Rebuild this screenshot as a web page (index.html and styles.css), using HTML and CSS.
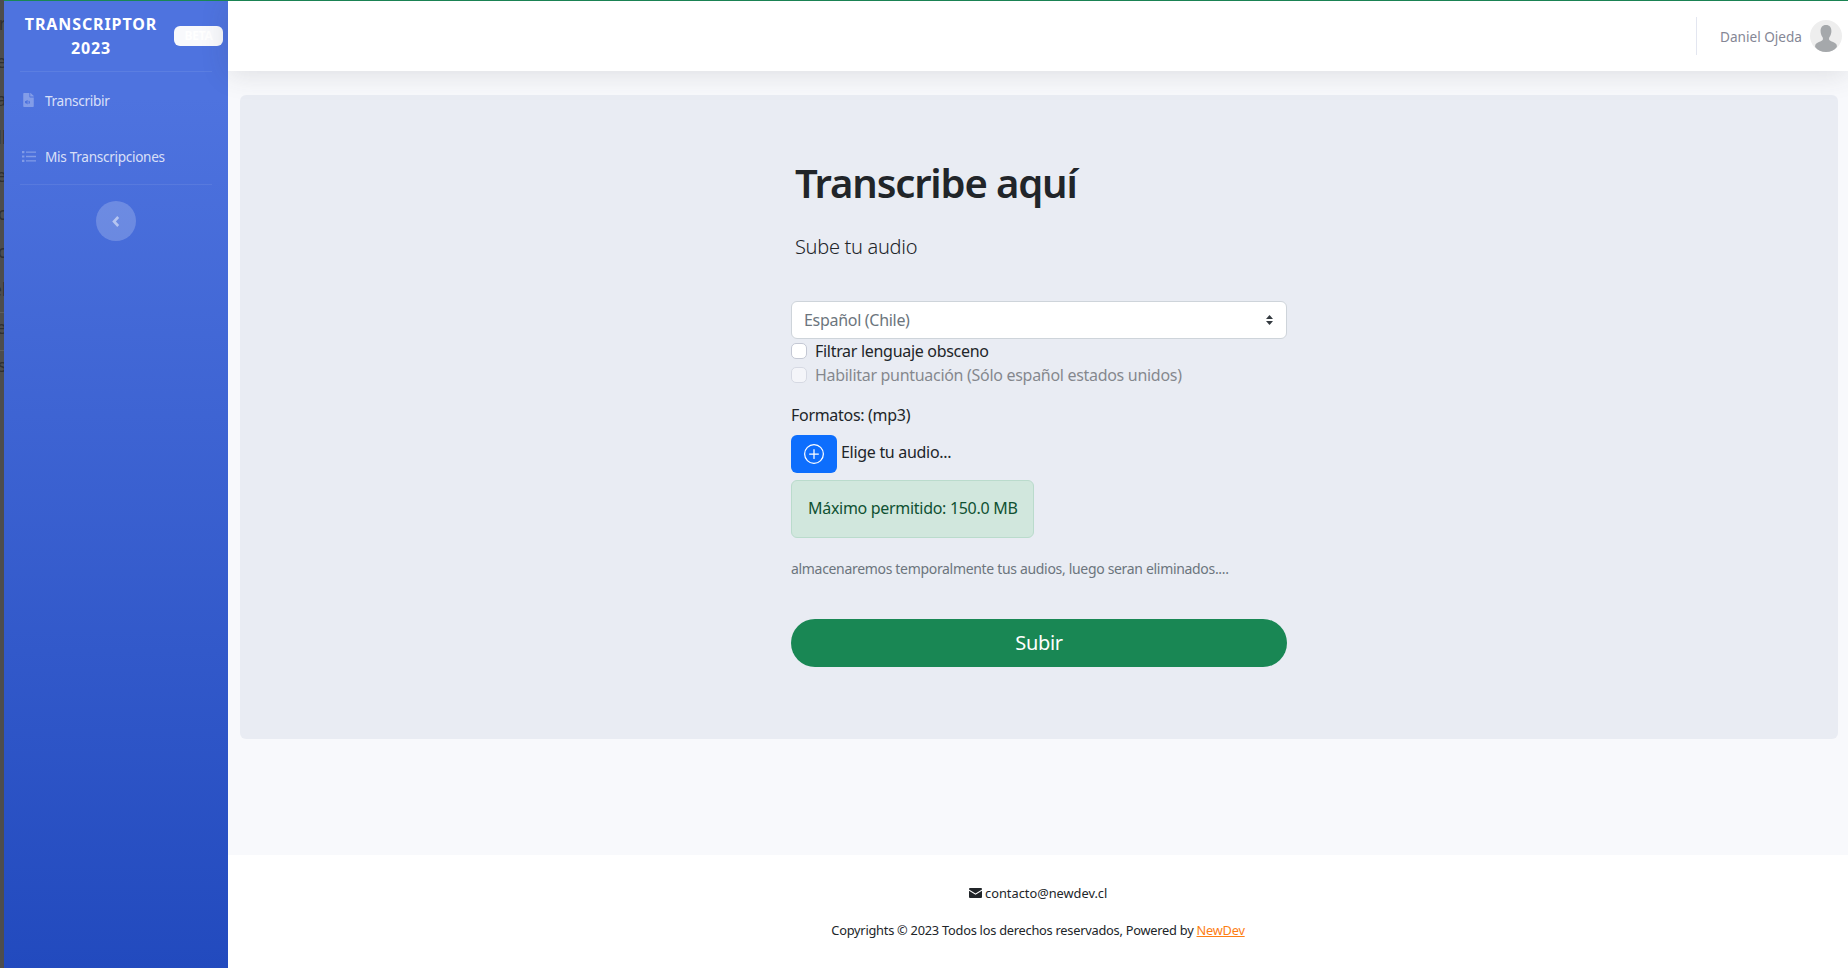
FILE: index.html
```html
<!DOCTYPE html>
<html>

<head>
    <meta charset="utf-8">
    <title>Transcriptor 2023</title>
    <link rel="stylesheet" href="styles.css">
</head>

<body>
    <div class="backdrop">
        <span>r</span>
        <span>e</span>
        <span>a</span>
        <span>ll</span>
        <span>e</span>
        <span>c</span>
        <span>c</span>
        <span>el</span>
        <span class="rule"></span>
        <span>e</span>
        <span class="rule"></span>
        <span>s</span>
    </div>

    <div id="wrapper">
        <aside class="sidebar">
            <div class="brand">
                <div class="brand-text">Transcriptor 2023</div>
                <span class="badge">BETA</span>
            </div>
            <hr class="sidebar-divider">
            <a class="nav-link" href="#">
                <svg class="nav-icon" width="11" height="14" viewBox="0 0 384 512"><path d="M224 136V0H24C10.700 0 0 10.700 0 24v464c0 13.300 10.700 24 24 24h336c13.300 0 24-10.700 24-24V160H248c-13.200 0-24-10.800-24-24zm-64 268c0 10.700-12.900 16-20.500 8.500L104 376H76c-6.600 0-12-5.400-12-12v-56c0-6.600 5.400-12 12-12h28l35.500-36.500c7.600-7.600 20.500-2.200 20.500 8.500v136zm33.200-47.600c9.100-9.300 9.100-24.100 0-33.400-22.100-22.800 12.200-56.200 34.400-33.500 27.200 27.900 27.200 72.400 0 100.400-21.800 22.300-56.900-10.400-34.400-33.500zM384 121.900v6.100H256V0h6.100c6.400 0 12.500 2.500 17 7l97.900 98c4.500 4.500 7 10.600 7 16.900z"/></svg>
                <span class="nav-text">Transcribir</span>
            </a>
            <a class="nav-link" href="#">
                <svg class="nav-icon list" width="14" height="11" viewBox="0 0 14 11"><path d="M0 0h2.400v2.200H0zM0 4.400h2.400v2.200H0zM0 8.800h2.400V11H0zM4 .4h10v1.400H4zM4 4.800h10v1.400H4zM4 9.200h10v1.400H4z"/></svg>
                <span class="nav-text">Mis Transcripciones</span>
            </a>
            <hr class="sidebar-divider last">
            <button class="sidebar-toggle" type="button">
                <svg width="8" height="11" viewBox="0 0 8 11"><path d="M6.200 1 2 5.500l4.200 4.500" fill="none" stroke="currentColor" stroke-width="2.600"/></svg>
            </button>
        </aside>

        <div class="page">
            <header class="topbar">
                <div class="topbar-divider"></div>
                <span class="user-name">Daniel Ojeda</span>
                <svg class="avatar" width="32" height="32" viewBox="0 0 32 32">
                    <circle cx="16" cy="16" r="16" fill="#eeeeee"/>
                    <path fill="#a5a8ab" d="M16 5c-3.700 0-5.600 2.600-5.400 6.200.1 2.300.8 4.500 2 6 .5.700.5 2.500-.2 3.100-1.600 1.300-5.400 2-6.800 4-.4.600-.5 1.500-.5 2.700C7.600 30.400 11.500 32 16 32s8.400-1.600 10.900-5c0-1.200-.1-2.100-.5-2.700-1.400-2-5.200-2.700-6.800-4-.7-.6-.7-2.400-.2-3.100 1.200-1.500 1.900-3.700 2-6C21.600 7.600 19.700 5 16 5z"/>
                </svg>
            </header>

            <main class="content">
                <section class="card">
                    <form class="upload-form">
                        <h1 class="title">Transcribe aquí</h1>
                        <p class="subtitle">Sube tu audio</p>

                        <select class="form-select">
                            <option>Español (Chile)</option>
                        </select>

                        <label class="form-check">
                            <input type="checkbox">
                            <span>Filtrar lenguaje obsceno</span>
                        </label>
                        <label class="form-check disabled">
                            <input type="checkbox" disabled>
                            <span>Habilitar puntuación (Sólo español estados unidos)</span>
                        </label>

                        <p class="formats">Formatos: (mp3)</p>

                        <div class="file-row">
                            <button class="file-btn" type="button">
                                <svg width="20" height="20" viewBox="0 0 16 16" fill="currentColor">
                                    <path d="M8 15A7 7 0 1 1 8 1a7 7 0 0 1 0 14zm0 1A8 8 0 1 0 8 0a8 8 0 0 0 0 16z"/>
                                    <path d="M8 4a.5.5 0 0 1 .5.5v3h3a.5.5 0 0 1 0 1h-3v3a.5.5 0 0 1-1 0v-3h-3a.5.5 0 0 1 0-1h3v-3A.5.5 0 0 1 8 4z"/>
                                </svg>
                            </button>
                            <span class="file-label">Elige tu audio...</span>
                        </div>

                        <div class="alert">Máximo permitido: 150.0 MB</div>

                        <p class="note">almacenaremos temporalmente tus audios, luego seran eliminados....</p>

                        <button class="submit-btn" type="button">Subir</button>
                    </form>
                </section>
            </main>

            <footer class="footer">
                <p class="contact">
                    <svg width="13" height="10" viewBox="0 0 13 10"><path fill="#212529" d="M1 0h11a1 1 0 0 1 1 1v.4L6.500 5.400 0 1.400V1a1 1 0 0 1 1-1zM0 2.800l6.500 4 6.500-4V9a1 1 0 0 1-1 1H1a1 1 0 0 1-1-1z"/></svg>
                    contacto@newdev.cl
                </p>
                <p class="copyright">Copyrights © 2023 Todos los derechos reservados, Powered by <a href="#">NewDev</a></p>
            </footer>
        </div>
    </div>
</body>

</html>
```

FILE: styles.css
```css
:root {
    --primary-top: #4e73df;
    --primary-bottom: #224abe;
    --page-bg: #f8f9fc;
    --card-bg: #e9ecf3;
    --ink: #212529;
    --muted: #6c757d;
    --green: #198754;
}

* {
    box-sizing: border-box;
}

html,
body {
    height: 100%;
}

body {
    margin: 0;
    display: flex;
    overflow: hidden;
    background-color: #4d4d4d;
    font-family: "Noto Sans", sans-serif;
    font-size: 16px;
    line-height: 24px;
    letter-spacing: -0.3px;
    color: var(--ink);
}

/* sliver of the page behind the app */
.backdrop {
    width: 4px;
    flex-shrink: 0;
    overflow: hidden;
    display: flex;
    flex-direction: column;
    align-items: flex-end;
    padding-top: 8px;
    font-size: 18px;
    line-height: 30px;
    color: #303030;
}

.backdrop span {
    height: 38px;
    margin-right: -2px;
}

.backdrop .rule {
    width: 4px;
    height: 1px;
    margin: 0 0 -1px;
    background-color: #5e5e5e;
}

#wrapper {
    flex: 1;
    min-width: 0;
    display: flex;
    border-top: 1px solid var(--green);
}

.sidebar {
    width: 224px;
    flex-shrink: 0;
    display: flex;
    flex-direction: column;
    background-color: var(--primary-top);
    background-image: linear-gradient(180deg, var(--primary-top) 10%, var(--primary-bottom) 100%);
}

.brand {
    height: 70px;
    display: flex;
    align-items: center;
    padding-left: 12px;
    gap: 8px;
    color: #fff;
}

.brand-text {
    width: 150px;
    text-align: center;
    text-transform: uppercase;
    font-weight: 700;
    font-size: 16px;
    letter-spacing: 0.9px;
}

.badge {
    width: 49px;
    height: 20px;
    border-radius: 6px;
    background-color: #f8f9fc;
    color: #fff;
    font-size: 12px;
    font-weight: 700;
    line-height: 20px;
    text-align: center;
}

.sidebar-divider {
    margin: 0 16px;
    border: 0;
    border-top: 1px solid rgba(255, 255, 255, 0.08);
}

.sidebar-divider.last {
    margin-bottom: 16px;
}

.nav-link {
    height: 56px;
    display: flex;
    align-items: center;
    padding-left: 16px;
    font-size: 13.6px;
    color: rgba(255, 255, 255, 0.8);
    text-decoration: none;
}

.nav-text {
    padding-top: 2px;
}

.nav-icon {
    width: 25px;
    padding-right: 11px;
    padding-left: 3px;
    fill: rgba(255, 255, 255, 0.3);
}

.nav-icon.list {
    padding-left: 2px;
    padding-right: 9px;
}

.sidebar-toggle {
    width: 40px;
    height: 40px;
    align-self: center;
    display: flex;
    align-items: center;
    justify-content: center;
    padding: 0;
    border: 0;
    border-radius: 50%;
    background-color: rgba(255, 255, 255, 0.2);
    color: rgba(255, 255, 255, 0.5);
}

.page {
    flex: 1;
    min-width: 0;
    display: flex;
    flex-direction: column;
    background-color: var(--page-bg);
}

.topbar {
    height: 70px;
    flex-shrink: 0;
    display: flex;
    align-items: center;
    justify-content: flex-end;
    padding-right: 6px;
    background-color: #fff;
    box-shadow: 0 2.4px 28px 0 rgba(58, 59, 69, 0.15);
    position: relative;
}

.topbar-divider {
    width: 1px;
    height: 38px;
    margin-right: 23px;
    background-color: #e3e6f0;
}

.user-name {
    margin-right: 8px;
    padding-top: 1px;
    font-size: 13.6px;
    letter-spacing: 0;
    color: #858796;
}

.content {
    flex: 1;
    padding: 24px 10px 0 12px;
}

.card {
    height: 644px;
    display: flex;
    justify-content: center;
    border-radius: 6px;
    background-color: var(--card-bg);
}

.upload-form {
    width: 496px;
    padding-top: 64px;
}

.title {
    margin: 0 0 25px 4px;
    font-size: 40px;
    line-height: 48px;
    font-weight: 600;
    letter-spacing: -1.15px;
}

.subtitle {
    margin: 0 0 39px 4px;
    font-size: 20px;
    line-height: 30px;
    font-weight: 300;
}

.form-select {
    display: block;
    width: 100%;
    height: 38px;
    padding: 0 12px;
    border: 1px solid #ced4da;
    border-radius: 6px;
    appearance: none;
    background-color: #fff;
    background-image: url("data:image/svg+xml,%3csvg xmlns='http://www.w3.org/2000/svg' viewBox='0 0 7 10'%3e%3cpath fill='%23343a40' d='M3.500 0 7 4H0zM3.500 10 0 6h7z'/%3e%3c/svg%3e");
    background-repeat: no-repeat;
    background-position: right 13px center;
    background-size: 7px 10px;
    font: inherit;
    letter-spacing: inherit;
    color: var(--muted);
}

.form-check {
    display: flex;
    align-items: center;
    gap: 8px;
    height: 24px;
}

.form-check input {
    width: 16px;
    height: 16px;
    margin: 0;
    appearance: none;
    border: 1px solid #c4c8d4;
    border-radius: 5px;
    background-color: #fff;
}

.form-check.disabled {
    opacity: 0.5;
}

.formats {
    margin: 16px 0 8px;
}

.file-row {
    display: flex;
    gap: 4px;
}

.file-btn {
    width: 46px;
    height: 38px;
    display: flex;
    align-items: center;
    justify-content: center;
    padding: 0;
    border: 0;
    border-radius: 6px;
    background-color: #0d6efd;
    color: #fff;
}

.file-label {
    line-height: 34px;
}

.alert {
    width: 243px;
    height: 58px;
    margin-top: 7px;
    padding: 15px 16px;
    border: 1px solid #badbcc;
    border-radius: 6px;
    background-color: #d1e7dd;
    color: #0f5132;
    white-space: nowrap;
}

.note {
    margin: 20px 0 40px;
    font-size: 14px;
    line-height: 21px;
    letter-spacing: -0.32px;
    color: var(--muted);
}

.submit-btn {
    display: block;
    width: 100%;
    height: 48px;
    border: 0;
    border-radius: 24px;
    background-color: var(--green);
    color: #fff;
    font: inherit;
    font-size: 20px;
    letter-spacing: inherit;
}

.footer {
    height: 113px;
    flex-shrink: 0;
    padding-top: 28px;
    background-color: #fff;
    text-align: center;
    font-size: 12.8px;
    line-height: 20px;
    letter-spacing: -0.24px;
}

.footer p {
    margin: 0 0 17px;
}

.footer .contact {
    letter-spacing: 0;
}

.footer a {
    color: #fd7e14;
}
```
